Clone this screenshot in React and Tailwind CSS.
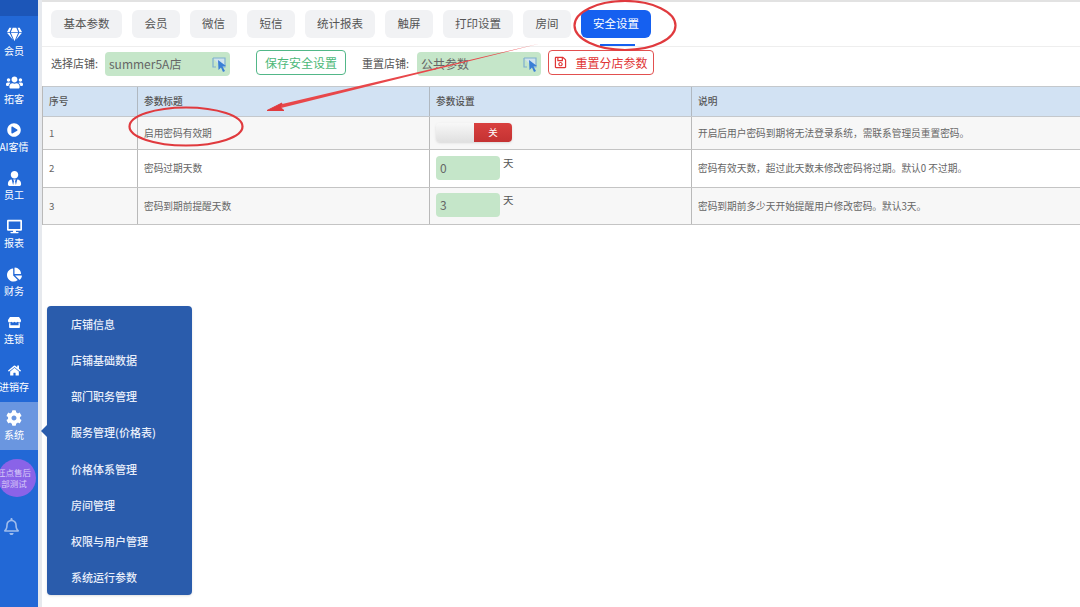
import React from "react"
import { FaGem, FaUsers, FaPlayCircle, FaUserTie, FaDesktop, FaChartPie, FaStore, FaHome, FaCog, FaRegBell, FaRegSave } from "react-icons/fa"

const font = { fontFamily: '"Noto Sans CJK SC", "Liberation Sans", sans-serif' }

const sideItems = [
  { icon: FaGem, label: "会员", size: 15 },
  { icon: FaUsers, label: "拓客", size: 17 },
  { icon: FaPlayCircle, label: "AI客情", size: 14 },
  { icon: FaUserTie, label: "员工", size: 15 },
  { icon: FaDesktop, label: "报表", size: 15 },
  { icon: FaChartPie, label: "财务", size: 15 },
  { icon: FaStore, label: "连锁", size: 13 },
  { icon: FaHome, label: "进销存", size: 13 },
  { icon: FaCog, label: "系统", size: 16, active: true },
]

const tabs = [
  { label: "基本参数", w: "w-[71px]" },
  { label: "会员", w: "w-[48px]" },
  { label: "微信", w: "w-[47px]" },
  { label: "短信", w: "w-[48px]" },
  { label: "统计报表", w: "w-[70px]" },
  { label: "触屏", w: "w-[48px]" },
  { label: "打印设置", w: "w-[70px]" },
  { label: "房间", w: "w-[48px]" },
]

const menu = ["店铺信息", "店铺基础数据", "部门职务管理", "服务管理(价格表)", "价格体系管理", "房间管理", "权限与用户管理", "系统运行参数"]

function PickIcon() {
  return (
    <svg width="16" height="16" viewBox="0 0 16 16" className="shrink-0">
      <path d="M1 2h12v9H9" fill="#cfe3ee" stroke="#7fb0d0" strokeWidth="1.2" />
      <path d="M1 2v9h3" fill="none" stroke="#7fb0d0" strokeWidth="1.2" />
      <path d="M6 4l8 6-3.5.6L13 15l-2 1-2-4.4L6.500 14z" fill="#3b7fd6" />
    </svg>
  )
}

function ShopPicker({ value, width }) {
  return (
    <div className={`flex items-center justify-between h-6 rounded-sm bg-[#c5e6c9] pl-[4px] pr-[2px] text-[12px] text-[#666] ${width}`}>
      <span>{value}</span>
      <PickIcon />
    </div>
  )
}

function Row({ h, bg, no, title, setting, desc }) {
  return (
    <div className={`grid grid-cols-[95px_292px_262px_1fr] border-b border-[#c4c4c4] text-[9.7px] text-[#666] ${h} ${bg}`}>
      <div className="flex items-center pl-[6px] border-r border-[#b9b9b9]">{no}</div>
      <div className="flex items-center pl-[6px] border-r border-[#b9b9b9]">{title}</div>
      <div className="flex items-center pl-[6px] pb-[2px] border-r border-[#b9b9b9]">{setting}</div>
      <div className="flex items-center pl-[6px]">{desc}</div>
    </div>
  )
}

function DayInput({ value }) {
  return (
    <div className="flex items-start gap-[3px]">
      <div className="w-[64px] h-6 rounded-sm bg-[#c5e6c9] pl-1 flex items-center text-[12px] text-[#666]">{value}</div>
      <span className="text-[10.5px] text-[#555] leading-[14px]">天</span>
    </div>
  )
}

export default function App() {
  return (
    <div className="relative flex w-[1080px] h-[607px] overflow-hidden bg-white" style={font}>
      {/* Sidebar */}
      <aside className="relative w-[38px] shrink-0 bg-[#2268d6] flex flex-col text-white overflow-hidden">
        <div className="w-full h-[16px] bg-[#1c56b8]" />
        <div className="w-full pt-[2px]">
          {sideItems.map((item) => (
            <div key={item.label} className={`w-full h-[48px] ${item.active ? "bg-[#6a96e0]" : ""}`}>
              <div className="w-[28px] flex flex-col items-center">
                <div className="h-[18px] mt-[7px] flex items-center justify-center">
                  <item.icon size={item.size} />
                </div>
                <span className="text-[10px] leading-[13px] mt-[1px] whitespace-nowrap">{item.label}</span>
              </div>
            </div>
          ))}
        </div>
        <div className="mt-[9px] w-[38px] h-[38px] -translate-x-[2px] rounded-full bg-[#8a63e8] flex items-center justify-center text-center text-[8.5px] leading-[11px] text-[#d9cbf8] shrink-0">
          <span className="whitespace-nowrap -translate-x-[3px]">
            旺点售后
            <br />
            部测试
          </span>
        </div>
        <FaRegBell size={17} className="mt-[21px] ml-[3px] text-[#9fbcec]" />
      </aside>
      <div className="w-[4px] shrink-0 bg-[#e6e9ee]" />

      {/* Main */}
      <main className="flex-1 min-w-0 flex flex-col">
        <div className="h-[2px] bg-[#e2e2e2] shrink-0" />
        <div className="relative h-[45px] shrink-0 border-b border-[#eeeeee] flex items-start gap-[10px] pt-[8px] pl-[9px]">
          {tabs.map((t) => (
            <div key={t.label} className={`h-[28px] rounded-md bg-[#f1f2f4] flex items-center justify-center text-[11.5px] text-[#555] ${t.w}`}>
              {t.label}
            </div>
          ))}
          <div className="w-[70px] h-[28px] rounded-md bg-[#1560f0] flex items-center justify-center text-[11.5px] text-white">安全设置</div>
          <div className="absolute left-[558px] bottom-0 w-[35px] h-[2px] bg-[#1560f0]" />
        </div>

        <div className="flex items-center h-[38px] shrink-0 pl-[9px] pb-[4px] text-[11px] text-[#555]">
          <span className="w-[54px] -mt-[2px]">选择店铺:</span>
          <ShopPicker value="summer5A店" width="w-[125px]" />
          <div className="ml-[26px] -mt-[3px] w-[90px] h-[25px] rounded-sm border border-[#52b788] flex items-center justify-center text-[#4cb878] text-[12px]">保存安全设置</div>
          <span className="ml-[16px] -mt-[2px] w-[55px]">重置店铺:</span>
          <ShopPicker value="公共参数" width="w-[124px]" />
          <div className="ml-[7px] -mt-[3px] w-[106px] h-[25px] rounded-sm border border-[#e2504f] flex items-center justify-center gap-[8px] text-[#e03535] text-[12px]">
            <FaRegSave size={13} />
            <span>重置分店参数</span>
          </div>
        </div>

        <div className="border-l border-[#b9b9b9] mt-[1px]">
          <div className="grid grid-cols-[95px_292px_262px_1fr] h-[31px] bg-[#d2e2f3] border-y border-[#c4c8cc] text-[9.7px] font-medium text-[#555]">
            <div className="flex items-center pl-[6px] border-r border-[#b0b8c0]">序号</div>
            <div className="flex items-center pl-[6px] border-r border-[#b0b8c0]">参数标题</div>
            <div className="flex items-center pl-[6px] border-r border-[#b0b8c0]">参数设置</div>
            <div className="flex items-center pl-[6px]">说明</div>
          </div>
          <Row
            h="h-[33px]"
            bg="bg-[#f7f7f7]"
            no="1"
            title="启用密码有效期"
            setting={
              <div className="flex w-[76px] h-[19px] rounded-sm overflow-hidden shadow-sm">
                <div className="w-[38px] bg-gradient-to-b from-[#f8f8f8] to-[#e0e0e0]" />
                <div className="w-[38px] bg-gradient-to-b from-[#d9403f] to-[#c43232] flex items-center justify-center text-[9.5px] text-white">关</div>
              </div>
            }
            desc="开启后用户密码到期将无法登录系统，需联系管理员重置密码。"
          />
          <Row h="h-[38px]" bg="bg-white" no="2" title="密码过期天数" setting={<DayInput value="0" />} desc="密码有效天数，超过此天数未修改密码将过期。默认0 不过期。" />
          <Row h="h-[37px]" bg="bg-[#f7f7f7]" no="3" title="密码到期前提醒天数" setting={<DayInput value="3" />} desc="密码到期前多少天开始提醒用户修改密码。默认3天。" />
        </div>
      </main>

      {/* Flyout menu */}
      <div className="absolute left-[47px] top-[306px] w-[145px] h-[289px] rounded-sm bg-[#2a5cac] pl-[24px] text-[11px] font-medium text-[#e8eefa] shadow-sm">
        <div className="absolute left-[-6px] top-[119px] w-0 h-0 border-y-[6px] border-y-transparent border-r-[6px] border-r-[#2a5cac]" />
        {menu.map((m) => (
          <div key={m} className="h-[36.2px] flex items-center">
            {m}
          </div>
        ))}
      </div>

      {/* Hand drawn annotations */}
      <svg className="absolute inset-0 pointer-events-none" width="1080" height="607" viewBox="0 0 1080 607">
        <ellipse cx="186" cy="126.500" rx="56.500" ry="19" fill="none" stroke="#e03a3e" strokeWidth="2.200" />
        <ellipse cx="625" cy="25.500" rx="50.500" ry="24.500" fill="none" stroke="#e03a3e" strokeWidth="2.200" />
        <path d="M540 43.500 L278 105 L279 108.500 Z" fill="#e8474a" />
        <path d="M267 110.500 L282 103 L280 107 L284 110.500 Z" fill="#e03a3e" stroke="#e03a3e" />
      </svg>
    </div>
  )
}
